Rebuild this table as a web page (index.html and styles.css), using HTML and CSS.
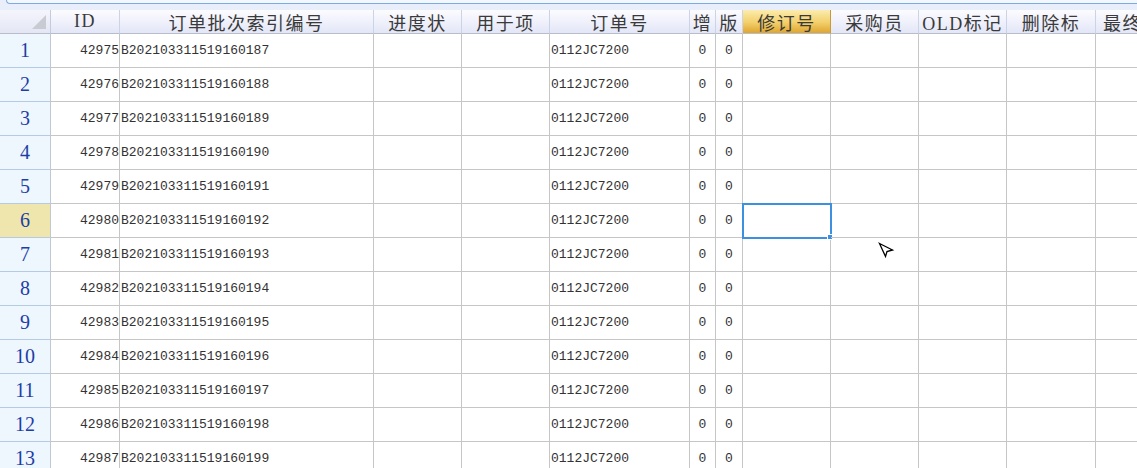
FILE: index.html
```html
<!DOCTYPE html>
<html>
<head>
<meta charset="utf-8">
<link rel="stylesheet" href="styles.css">
</head>
<body>
<div class="topbar"><div class="topbox"></div></div>
<div class="grid">
  <div class="row head">
    <div class="cell c0 corner"><span class="tri"></span></div>
    <div class="cell c1">ID</div>
    <div class="cell c2">订单批次索引编号</div>
    <div class="cell c3">进度状</div>
    <div class="cell c4">用于项</div>
    <div class="cell c5">订单号</div>
    <div class="cell c6">增</div>
    <div class="cell c7">版</div>
    <div class="cell c8 active-col">修订号</div>
    <div class="cell c9">采购员</div>
    <div class="cell c10">OLD标记</div>
    <div class="cell c11">删除标</div>
    <div class="cell c12 clip">最终</div>
  </div>
  <div class="row"><div class="cell c0 rh">1</div><div class="cell c1 num">42975</div><div class="cell c2 txt">B202103311519160187</div><div class="cell c3"></div><div class="cell c4"></div><div class="cell c5 txt">0112JC7200</div><div class="cell c6 ctr">0</div><div class="cell c7 ctr">0</div><div class="cell c8"></div><div class="cell c9"></div><div class="cell c10"></div><div class="cell c11"></div><div class="cell c12"></div></div>
  <div class="row"><div class="cell c0 rh">2</div><div class="cell c1 num">42976</div><div class="cell c2 txt">B202103311519160188</div><div class="cell c3"></div><div class="cell c4"></div><div class="cell c5 txt">0112JC7200</div><div class="cell c6 ctr">0</div><div class="cell c7 ctr">0</div><div class="cell c8"></div><div class="cell c9"></div><div class="cell c10"></div><div class="cell c11"></div><div class="cell c12"></div></div>
  <div class="row"><div class="cell c0 rh">3</div><div class="cell c1 num">42977</div><div class="cell c2 txt">B202103311519160189</div><div class="cell c3"></div><div class="cell c4"></div><div class="cell c5 txt">0112JC7200</div><div class="cell c6 ctr">0</div><div class="cell c7 ctr">0</div><div class="cell c8"></div><div class="cell c9"></div><div class="cell c10"></div><div class="cell c11"></div><div class="cell c12"></div></div>
  <div class="row"><div class="cell c0 rh">4</div><div class="cell c1 num">42978</div><div class="cell c2 txt">B202103311519160190</div><div class="cell c3"></div><div class="cell c4"></div><div class="cell c5 txt">0112JC7200</div><div class="cell c6 ctr">0</div><div class="cell c7 ctr">0</div><div class="cell c8"></div><div class="cell c9"></div><div class="cell c10"></div><div class="cell c11"></div><div class="cell c12"></div></div>
  <div class="row"><div class="cell c0 rh">5</div><div class="cell c1 num">42979</div><div class="cell c2 txt">B202103311519160191</div><div class="cell c3"></div><div class="cell c4"></div><div class="cell c5 txt">0112JC7200</div><div class="cell c6 ctr">0</div><div class="cell c7 ctr">0</div><div class="cell c8"></div><div class="cell c9"></div><div class="cell c10"></div><div class="cell c11"></div><div class="cell c12"></div></div>
  <div class="row"><div class="cell c0 rh rh-active">6</div><div class="cell c1 num">42980</div><div class="cell c2 txt">B202103311519160192</div><div class="cell c3"></div><div class="cell c4"></div><div class="cell c5 txt">0112JC7200</div><div class="cell c6 ctr">0</div><div class="cell c7 ctr">0</div><div class="cell c8 sel"><span class="selbox"><span class="handle"></span></span></div><div class="cell c9 curcell"><svg class="cursor" width="18" height="18" viewBox="0 0 18 18"><polygon points="1.5,1.5 14.5,8 9,9.5 7.5,14.5" fill="#fff" stroke="#000" stroke-width="1.3" stroke-linejoin="miter"/></svg></div><div class="cell c10"></div><div class="cell c11"></div><div class="cell c12"></div></div>
  <div class="row"><div class="cell c0 rh">7</div><div class="cell c1 num">42981</div><div class="cell c2 txt">B202103311519160193</div><div class="cell c3"></div><div class="cell c4"></div><div class="cell c5 txt">0112JC7200</div><div class="cell c6 ctr">0</div><div class="cell c7 ctr">0</div><div class="cell c8"></div><div class="cell c9"></div><div class="cell c10"></div><div class="cell c11"></div><div class="cell c12"></div></div>
  <div class="row"><div class="cell c0 rh">8</div><div class="cell c1 num">42982</div><div class="cell c2 txt">B202103311519160194</div><div class="cell c3"></div><div class="cell c4"></div><div class="cell c5 txt">0112JC7200</div><div class="cell c6 ctr">0</div><div class="cell c7 ctr">0</div><div class="cell c8"></div><div class="cell c9"></div><div class="cell c10"></div><div class="cell c11"></div><div class="cell c12"></div></div>
  <div class="row"><div class="cell c0 rh">9</div><div class="cell c1 num">42983</div><div class="cell c2 txt">B202103311519160195</div><div class="cell c3"></div><div class="cell c4"></div><div class="cell c5 txt">0112JC7200</div><div class="cell c6 ctr">0</div><div class="cell c7 ctr">0</div><div class="cell c8"></div><div class="cell c9"></div><div class="cell c10"></div><div class="cell c11"></div><div class="cell c12"></div></div>
  <div class="row"><div class="cell c0 rh">10</div><div class="cell c1 num">42984</div><div class="cell c2 txt">B202103311519160196</div><div class="cell c3"></div><div class="cell c4"></div><div class="cell c5 txt">0112JC7200</div><div class="cell c6 ctr">0</div><div class="cell c7 ctr">0</div><div class="cell c8"></div><div class="cell c9"></div><div class="cell c10"></div><div class="cell c11"></div><div class="cell c12"></div></div>
  <div class="row"><div class="cell c0 rh">11</div><div class="cell c1 num">42985</div><div class="cell c2 txt">B202103311519160197</div><div class="cell c3"></div><div class="cell c4"></div><div class="cell c5 txt">0112JC7200</div><div class="cell c6 ctr">0</div><div class="cell c7 ctr">0</div><div class="cell c8"></div><div class="cell c9"></div><div class="cell c10"></div><div class="cell c11"></div><div class="cell c12"></div></div>
  <div class="row"><div class="cell c0 rh">12</div><div class="cell c1 num">42986</div><div class="cell c2 txt">B202103311519160198</div><div class="cell c3"></div><div class="cell c4"></div><div class="cell c5 txt">0112JC7200</div><div class="cell c6 ctr">0</div><div class="cell c7 ctr">0</div><div class="cell c8"></div><div class="cell c9"></div><div class="cell c10"></div><div class="cell c11"></div><div class="cell c12"></div></div>
  <div class="row"><div class="cell c0 rh">13</div><div class="cell c1 num">42987</div><div class="cell c2 txt">B202103311519160199</div><div class="cell c3"></div><div class="cell c4"></div><div class="cell c5 txt">0112JC7200</div><div class="cell c6 ctr">0</div><div class="cell c7 ctr">0</div><div class="cell c8"></div><div class="cell c9"></div><div class="cell c10"></div><div class="cell c11"></div><div class="cell c12"></div></div>
</div>
</body>
</html>
```
FILE: styles.css
```css
html, body {
  margin: 0;
  padding: 0;
}
body {
  width: 1137px;
  height: 468px;
  overflow: hidden;
  background: #ffffff;
  font-family: "Liberation Mono", "Noto Sans CJK SC", monospace;
  color: #333;
}
.topbar {
  height: 10px;
  box-sizing: border-box;
  padding-left: 6px;
  background: #e8effb;
}
.topbox {
  height: 4px;
  box-sizing: border-box;
  border-left: 1px solid #7fa9e4;
  border-bottom: 1px solid #7fa9e4;
  border-bottom-left-radius: 4px;
  background: #f3f7fe;
}
.grid {
  display: flex;
  flex-direction: column;
  width: max-content;
}
.row {
  display: flex;
  height: 34px;
}
.cell {
  flex: none;
  box-sizing: border-box;
  border-right: 1px solid #c6c6c6;
  border-bottom: 1px solid #c6c6c6;
  display: flex;
  align-items: center;
  font-size: 13px;
  white-space: nowrap;
  overflow: hidden;
}
.c0 { width: 51px; }
.c1 { width: 69px; }
.c2 { width: 254px; }
.c3 { width: 88px; }
.c4 { width: 88px; }
.c5 { width: 140px; }
.c6 { width: 26px; }
.c7 { width: 27px; }
.c8 { width: 88px; }
.c9 { width: 88px; }
.c10 { width: 88px; }
.c11 { width: 89px; }
.c12 { width: 88px; }

.head {
  height: 24px;
}
.head .cell {
  justify-content: center;
  font-family: "Liberation Serif", "Noto Sans CJK SC", serif;
  font-size: 18px;
  letter-spacing: 1.5px;
  color: #3a3a3a;
  background: linear-gradient(#fcfcff, #e3e6f7);
  border-right: 1px solid #cbd3e6;
  border-bottom: 1px solid #b9bdc9;
}
.head .clip {
  justify-content: flex-start;
  padding-left: 7px;
}
.head .active-col {
  background: linear-gradient(#fcecae, #f2cf6a 55%, #dea431);
  border-right-color: #c99a3a;
}
.head .corner {
  justify-content: flex-end;
  align-items: flex-end;
  padding: 0 4px 4px 0;
  background: linear-gradient(#f4f5fc, #e4e6f5);
  border-right: 1px solid #c3cbdc;
}
.tri {
  width: 0;
  height: 0;
  border-left: 14px solid transparent;
  border-bottom: 14px solid #c9cbd2;
}

.rh {
  justify-content: center;
  background: #eef6fe;
  font-family: "Liberation Serif", serif;
  font-size: 20px;
  color: #1e3ea6;
  border-right: 1px solid #c2c8d2;
  border-bottom: 1px solid #b5cbe3;
}
.rh-active {
  background: #efe6ad;
}
.num {
  justify-content: flex-end;
  padding-right: 0;
}
.txt {
  padding-left: 1px;
}
.ctr {
  justify-content: center;
}
.sel {
  position: relative;
  overflow: visible;
}
.selbox {
  position: absolute;
  left: -1px;
  top: -1px;
  width: 90px;
  height: 36px;
  box-sizing: border-box;
  border: 2px solid #3d8fe0;
}
.handle {
  position: absolute;
  right: -3px;
  bottom: -3px;
  width: 4px;
  height: 4px;
  background: #3d8fe0;
  border: 1px solid #fff;
}
.curcell {
  position: relative;
  overflow: visible;
}
.cursor {
  position: absolute;
  left: 47px;
  top: 38px;
}
```
